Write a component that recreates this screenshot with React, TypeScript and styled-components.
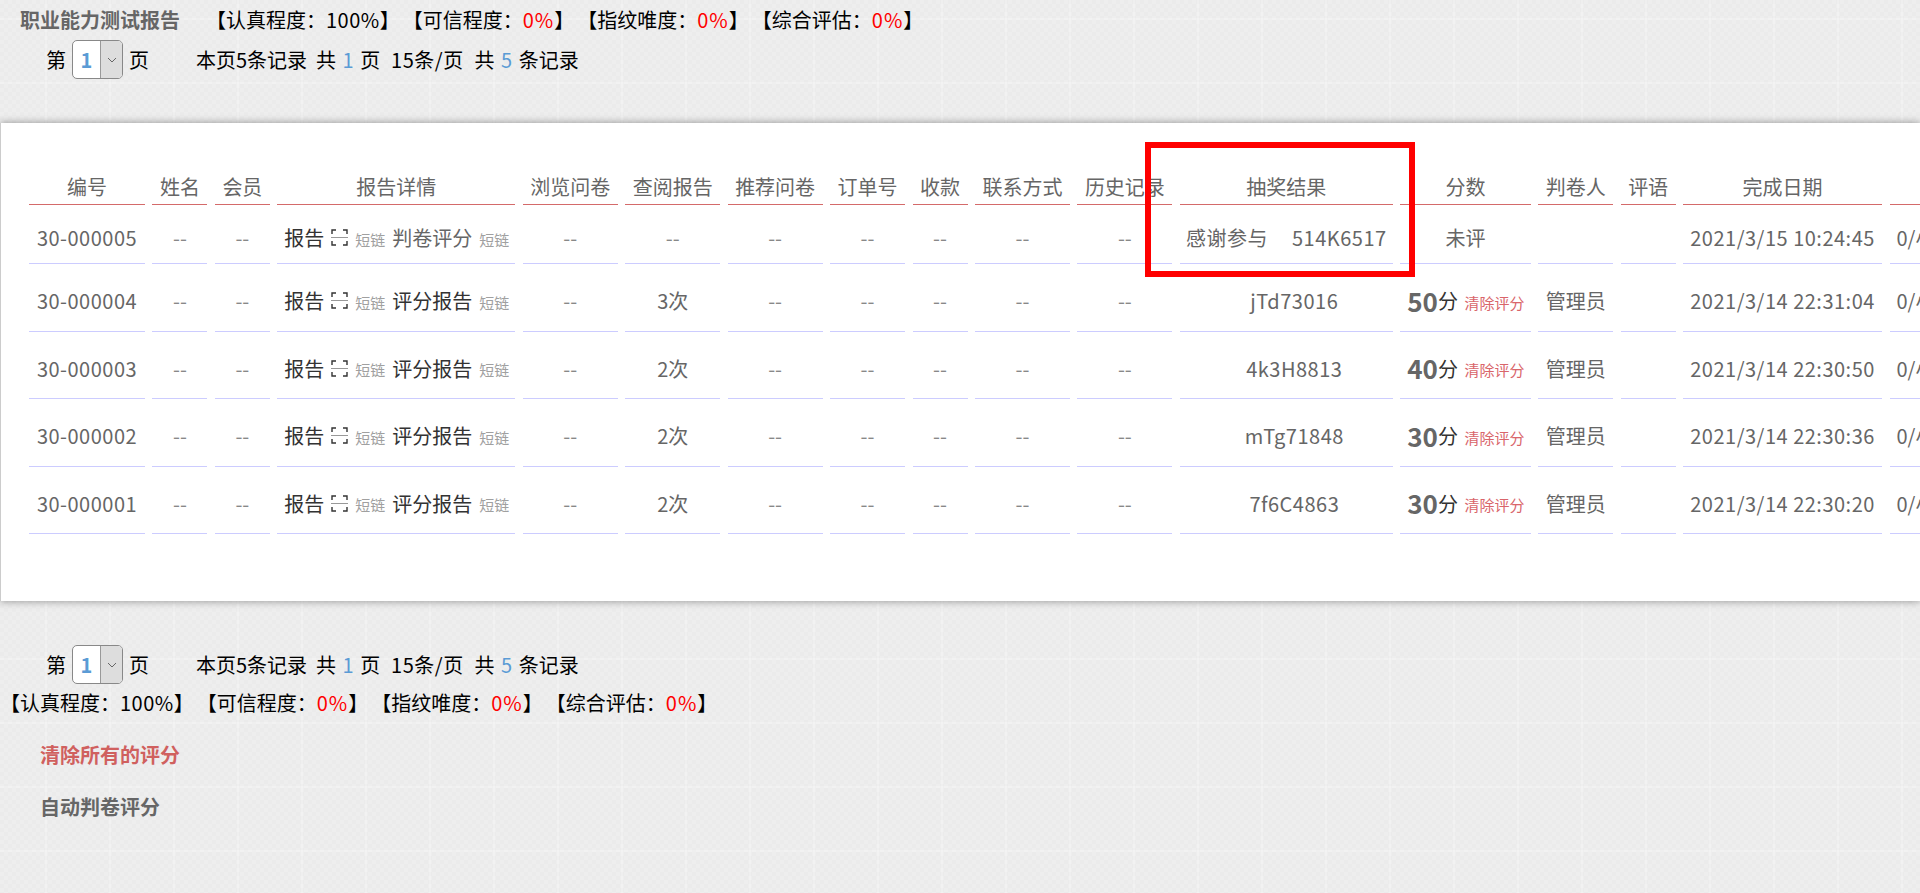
import React from "react";
import styled, { createGlobalStyle } from "styled-components";

const Global = createGlobalStyle`
  html, body { margin: 0; padding: 0; height: 100%; overflow: hidden; }
  body {
    font-family: "Noto Sans CJK SC", "Noto Sans", sans-serif;
    font-size: 20px;
    color: #000;
    background-color: #eeeeee;
    background-image:
      linear-gradient(90deg, rgba(255,255,255,.22) 2px, transparent 2px),
      linear-gradient(0deg, rgba(255,255,255,.22) 2px, transparent 2px),
      conic-gradient(#ebebeb 25%, transparent 0 50%, #ebebeb 0 75%, transparent 0);
    background-size: 64px 64px, 64px 64px, 8px 8px;
    background-position: 45px 0, 0 20px, 0 0;
  }
`;

const Page = styled.div`
  width: 1920px;
  height: 893px;
  overflow: hidden;
`;

const TopLine = styled.div`
  display: flex;
  align-items: center;
  height: 40px;
  padding-left: 20px;
  line-height: 40px;
`;

const Title = styled.span`
  font-weight: 700;
  color: #666;
  width: 186px;
  flex: none;
`;

const MetricRow = styled.div`
  display: flex;
  align-items: center;
  height: 36px;
  white-space: pre;
`;

const Metric = styled.span`
  display: inline-block;
  padding-right: 3px;
`;

const Percent = styled.span`
  letter-spacing: 0.5px;
`;

const Red = styled.span`
  color: #ff0000;
  letter-spacing: 1px;
`;

const Pager = styled.div`
  display: flex;
  align-items: center;
  height: 39px;
  padding-left: 46px;
  white-space: pre;
`;

const Select = styled.div`
  display: flex;
  box-sizing: border-box;
  width: 51px;
  height: 39px;
  margin: 0 6px 0 6px;
  border: 1px solid #888;
  border-radius: 5px;
  overflow: hidden;
  background: #fff;
`;

const SelectValue = styled.span`
  flex: 1;
  display: flex;
  align-items: center;
  justify-content: center;
  font-weight: 700;
  color: #5b9bd5;
`;

const SelectArrow = styled.span`
  width: 21px;
  display: flex;
  align-items: center;
  justify-content: center;
  background: #dddddd;
  border-left: 1px solid #999;
`;

const PagerInfo = styled.span`
  margin-left: 47px;
`;

const Blue = styled.span`
  color: #5b9bd5;
  padding: 0 2px;
`;

const PerPage = styled.span`
  margin: 0 2px;
  letter-spacing: 0.5px;
`;

const Card = styled.section`
  position: relative;
  box-sizing: border-box;
  margin: 44px 0;
  height: 478px;
  padding: 45px 0 0 28px;
  background: #fff;
  border-left: 1px solid #ccc;
  box-shadow: 0 0 8px rgba(0, 0, 0, 0.4);
  overflow: hidden;
`;

const Table = styled.div`
  display: grid;
  grid-template-columns: 116px 55px 55px 238px 95px 95px 95px 75px 55px 95px 95px 213px 130.5px 75px 55px 199px 100px;
  grid-template-rows: 37px 59px repeat(4, 67.5px);
  column-gap: 7.45px;
  width: max-content;
`;

const Head = styled.div`
  display: flex;
  align-items: center;
  justify-content: center;
  box-sizing: border-box;
  padding-top: 1px;
  color: #666;
  white-space: nowrap;
  border-bottom: 1px solid #d46a6a;
`;

const Cell = styled.div<{ $start?: boolean; $tone?: string; $latin?: boolean; $shift?: boolean }>`
  display: flex;
  align-items: center;
  justify-content: ${(p) => (p.$start ? "flex-start" : "center")};
  box-sizing: border-box;
  padding: 7px 0 0 ${(p) => (p.$start ? 7 : p.$shift ? 16 : 0)}px;
  color: ${(p) => p.$tone || "#666"};
  letter-spacing: ${(p) => (p.$latin ? "0.5px" : "normal")};
  white-space: nowrap;
  border-bottom: 1px solid #ccccff;
`;

const ReportWrap = styled.span`
  display: flex;
  align-items: center;
  gap: 7px;
`;

const DarkText = styled.span<{ $soft?: boolean }>`
  color: ${(p) => (p.$soft ? "#666" : "#333")};
`;

const Short = styled.span`
  font-size: 15px;
  color: #a0a0a0;
  padding-top: 3px;
`;

const Prize = styled.span`
  display: flex;
  gap: 24px;
`;

const Score = styled.span`
  font-size: 26px;
  font-weight: 700;
  color: #666;
  line-height: 30px;
`;

const ScoreUnit = styled.span`
  color: #333;
`;

const ClearScore = styled.span`
  font-size: 15px;
  color: #d9656a;
  margin-left: 6.5px;
  padding-top: 3px;
`;

const Highlight = styled.div`
  position: absolute;
  left: 1144px;
  top: 19px;
  width: 270px;
  height: 135px;
  box-sizing: border-box;
  border: 6px solid #ff0000;
  pointer-events: none;
`;

const ActionLink = styled.div<{ $danger?: boolean }>`
  height: 40px;
  line-height: 40px;
  margin: 12px 0 0 40px;
  font-weight: 700;
  color: ${(p) => (p.$danger ? "#d0605e" : "#666")};
`;

const Actions = styled.div`
  padding-top: 3px;
`;

const ScanIcon = () => (
  <svg width="17" height="17" viewBox="0 0 17 17" fill="none" stroke="#333" strokeWidth="1.4">
    <path d="M5 1H1v4M12 1h4v4M5 16H1v-4M12 16h4v-4" />
    <path d="M0 8.5h17" stroke="#999" strokeWidth="1" />
  </svg>
);

const Chevron = () => (
  <svg width="10" height="6" viewBox="0 0 10 6" fill="none" stroke="#666" strokeWidth="1">
    <path d="M1 1l4 4 4-4" />
  </svg>
);

const PagerBar = () => (
  <Pager>
    第
    <Select>
      <SelectValue>1</SelectValue>
      <SelectArrow>
        <Chevron />
      </SelectArrow>
    </Select>
    页
    <PagerInfo>
      本页5条记录  共 <Blue>1</Blue> 页  <PerPage>15条/页</PerPage>  共 <Blue>5</Blue> 条记录
    </PagerInfo>
  </Pager>
);

const Metrics = () => (
  <>
    <Metric>
      【认真程度：<Percent>100%</Percent>】
    </Metric>
    <Metric>
      【可信程度：<Red>0%</Red>】
    </Metric>
    <Metric>
      【指纹唯度：<Red>0%</Red>】
    </Metric>
    <Metric>
      【综合评估：<Red>0%</Red>】
    </Metric>
  </>
);

const headers = ["编号", "姓名", "会员", "报告详情", "浏览问卷", "查阅报告", "推荐问卷", "订单号", "收款", "联系方式", "历史记录", "抽奖结果", "分数", "判卷人", "评语", "完成日期", ""];

type RowData = { id: string; views: string; code: string; score?: string; date: string };

const rows: RowData[] = [
  { id: "30-000005", views: "--", code: "514K6517", date: "2021/3/15 10:24:45" },
  { id: "30-000004", views: "3次", code: "jTd73016", score: "50", date: "2021/3/14 22:31:04" },
  { id: "30-000003", views: "2次", code: "4k3H8813", score: "40", date: "2021/3/14 22:30:50" },
  { id: "30-000002", views: "2次", code: "mTg71848", score: "30", date: "2021/3/14 22:30:36" },
  { id: "30-000001", views: "2次", code: "7f6C4863", score: "30", date: "2021/3/14 22:30:20" },
];

const Dash = ({ tone = "#888" }: { tone?: string }) => <Cell $tone={tone}>--</Cell>;

export default function App() {
  return (
    <Page>
      <Global />
      <TopLine>
        <Title>职业能力测试报告</Title>
        <Metrics />
      </TopLine>
      <PagerBar />
      <Card>
        <Table>
          {headers.map((h, i) => (
            <Head key={i}>{h}</Head>
          ))}
          {rows.map((r) => (
            <React.Fragment key={r.id}>
              <Cell $latin>{r.id}</Cell>
              <Dash />
              <Dash />
              <Cell $start>
                <ReportWrap>
                  <DarkText>报告</DarkText>
                  <ScanIcon />
                  <Short>短链</Short>
                  <DarkText $soft={!r.score}>{r.score ? "评分报告" : "判卷评分"}</DarkText>
                  <Short>短链</Short>
                </ReportWrap>
              </Cell>
              <Dash />
              {r.views === "--" ? <Dash /> : <Cell>{r.views}</Cell>}
              <Dash />
              <Dash />
              <Dash />
              <Dash />
              <Dash />
              {r.score ? (
                <Cell $latin $shift>
                  {r.code}
                </Cell>
              ) : (
                <Cell $latin>
                  <Prize>
                    <span>感谢参与</span>
                    <span>{r.code}</span>
                  </Prize>
                </Cell>
              )}
              {r.score ? (
                <Cell $start>
                  <Score>{r.score}</Score>
                  <ScoreUnit>分</ScoreUnit>
                  <ClearScore>清除评分</ClearScore>
                </Cell>
              ) : (
                <Cell>未评</Cell>
              )}
              <Cell>{r.score ? "管理员" : ""}</Cell>
              <Cell />
              <Cell $latin>{r.date}</Cell>
              <Cell $start>0/小时</Cell>
            </React.Fragment>
          ))}
        </Table>
        <Highlight />
      </Card>
      <PagerBar />
      <MetricRow>
        <Metrics />
      </MetricRow>
      <Actions>
        <ActionLink $danger>清除所有的评分</ActionLink>
        <ActionLink>自动判卷评分</ActionLink>
      </Actions>
    </Page>
  );
}
